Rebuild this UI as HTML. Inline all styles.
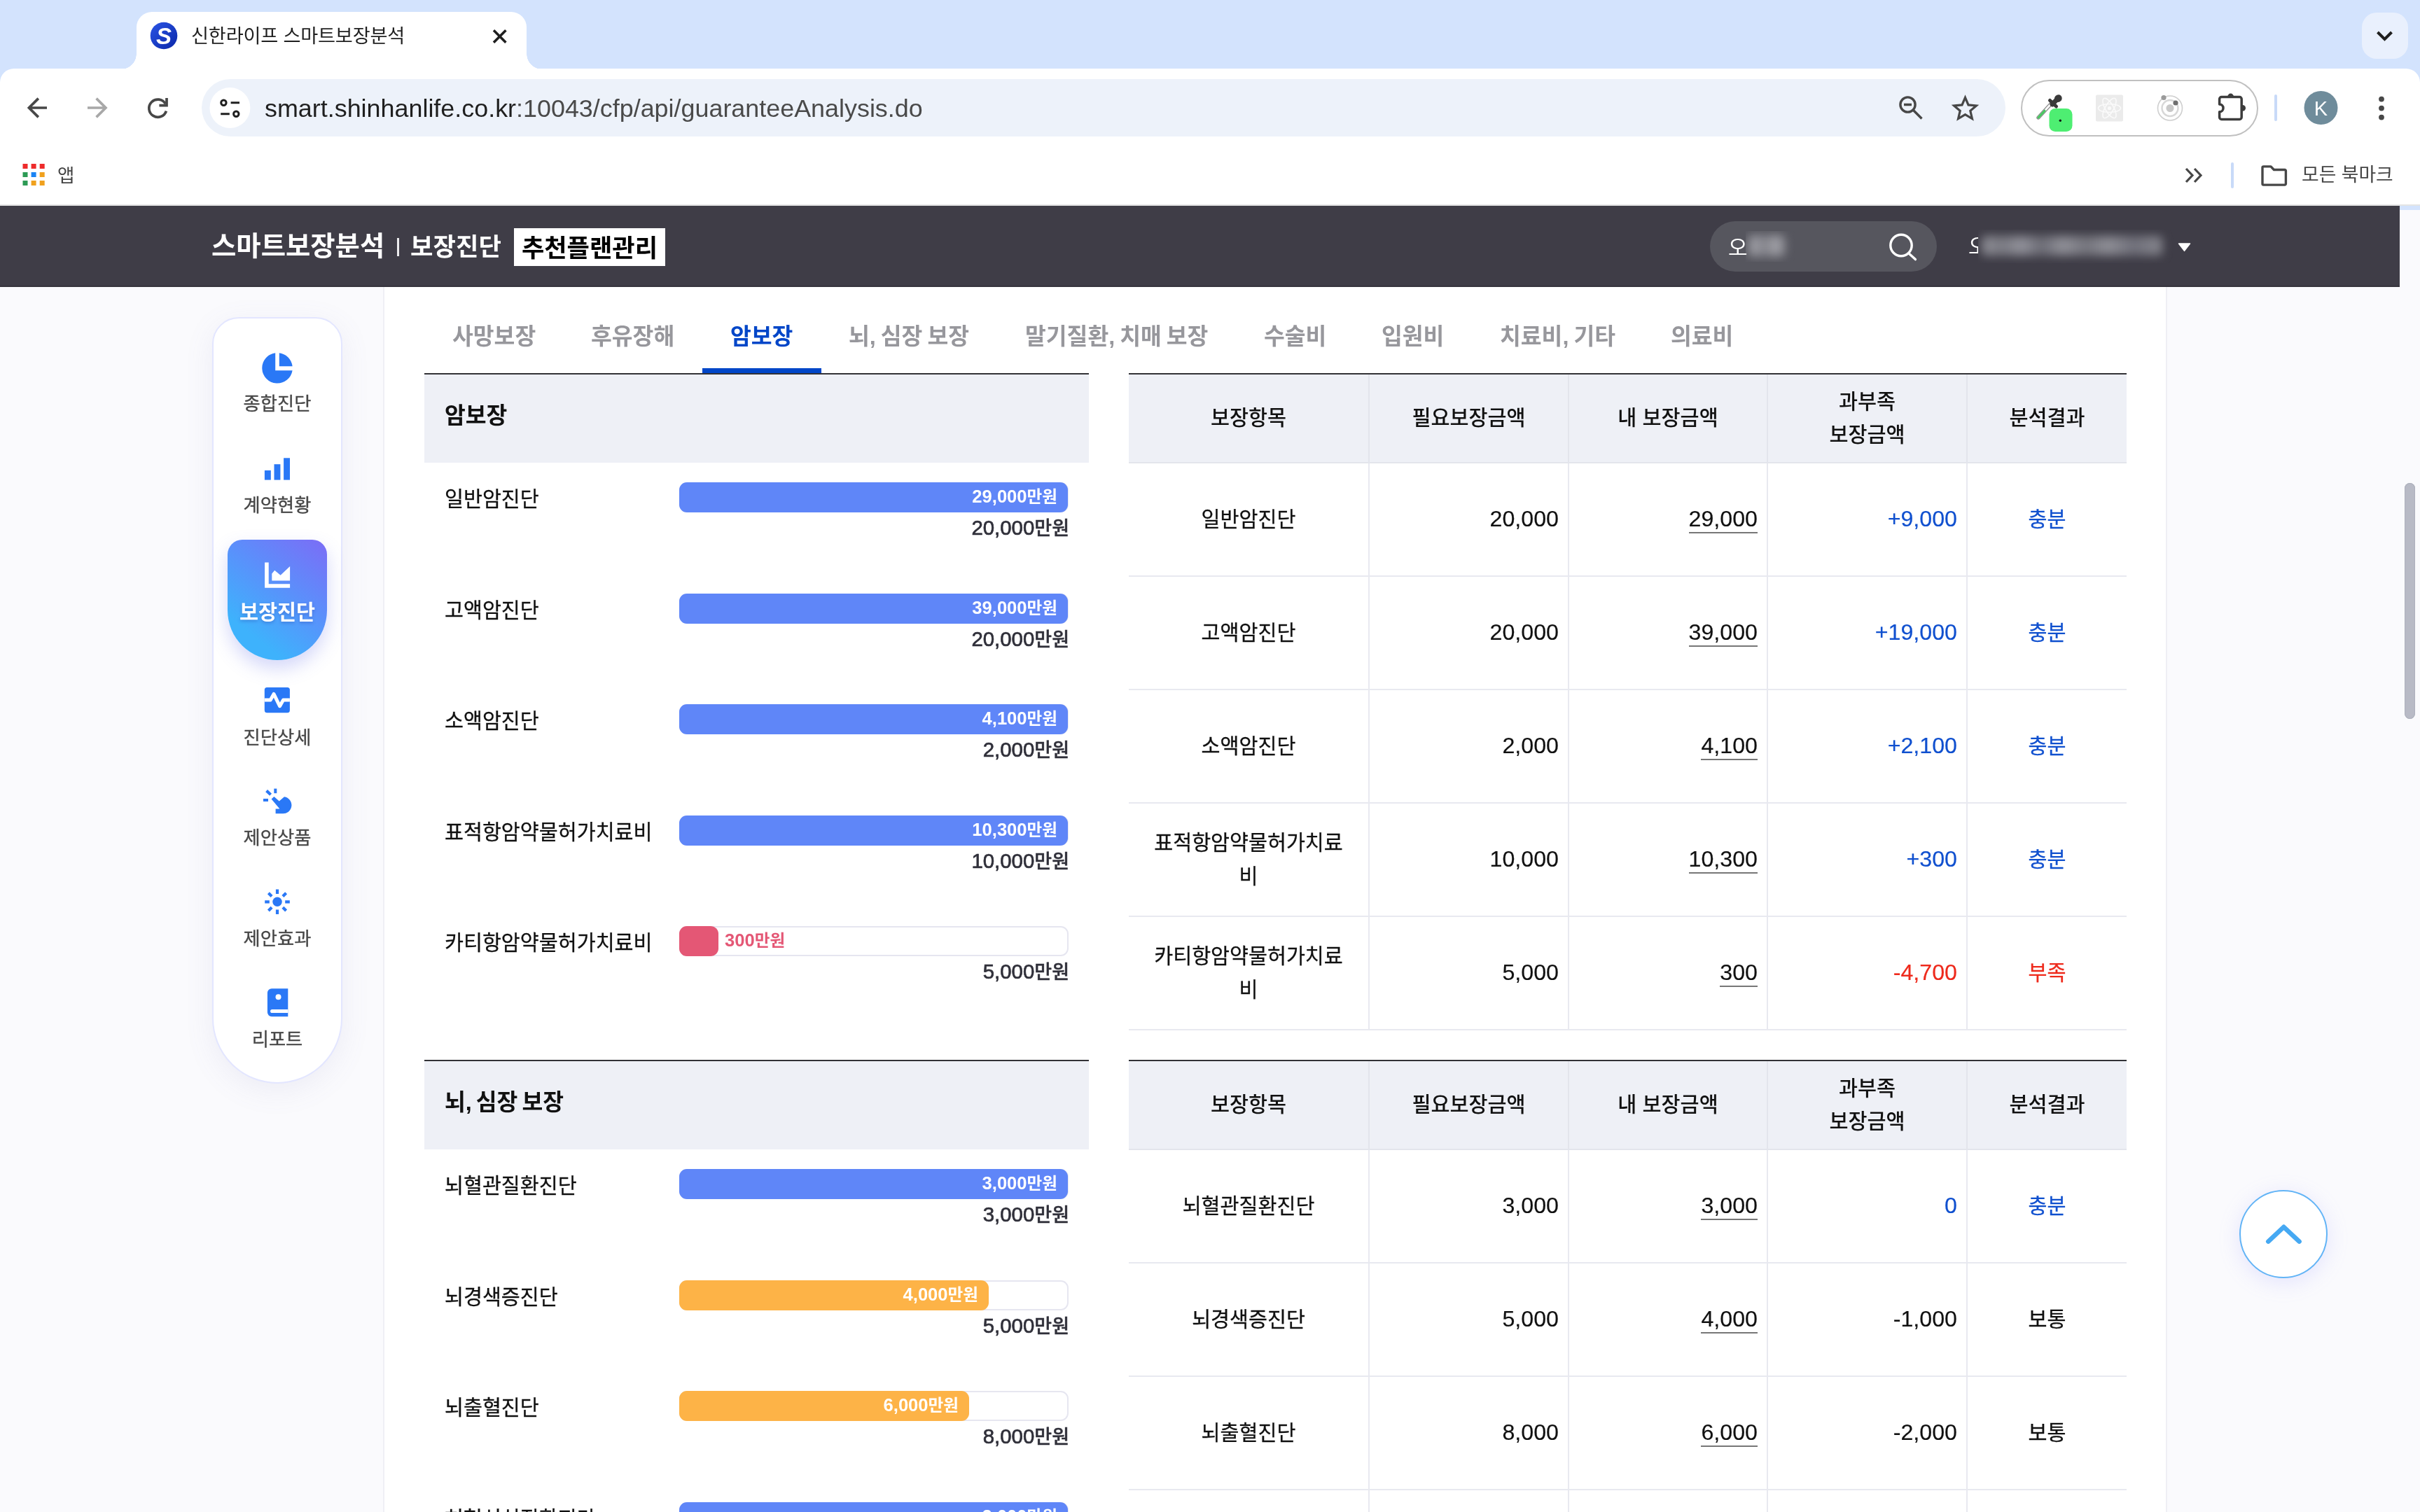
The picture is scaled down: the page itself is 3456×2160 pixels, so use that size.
<!DOCTYPE html>
<html lang="ko">
<head>
<meta charset="utf-8">
<title>신한라이프 스마트보장분석</title>
<style>
*{box-sizing:border-box;margin:0;padding:0}
html,body{width:3456px;height:2160px;overflow:hidden;background:#fafafd}
body{position:relative;font-family:"Liberation Sans","Noto Sans CJK KR",sans-serif;color:#111;-webkit-font-smoothing:antialiased;will-change:transform}
.abs{position:absolute}
/* ---------- browser chrome ---------- */
#tabstrip{left:0;top:0;width:3456px;height:300px;background:#d3e3fd}
#toolbar{left:0;top:98px;width:3456px;height:196px;background:#fff;border-radius:20px 20px 0 0}
#chromeline{left:0;top:292px;width:3456px;height:2px;background:#e4e4e4}
#tab{left:195px;top:17px;width:557px;height:82px;background:#fff;border-radius:22px 22px 0 0}
#tab:before,#tab:after{content:"";position:absolute;bottom:0;width:22px;height:22px}
#tab:before{left:-22px;background:radial-gradient(circle at 0 0,transparent 21.5px,#fff 22px)}
#tab:after{right:-22px;background:radial-gradient(circle at 100% 0,transparent 21.5px,#fff 22px)}
#tabtitle{left:273px;top:31px;font-size:27.2px;line-height:42px;color:#1f1f1f;white-space:nowrap;letter-spacing:-0.2px}
#urlpill{left:288px;top:113px;width:2576px;height:82px;border-radius:41px;background:#edf2fa}
#urltext{left:378px;top:133px;font-size:35.9px;line-height:44px;color:#1f1f1f;white-space:nowrap}
#extpill{left:2886px;top:114px;width:339px;height:81px;border-radius:41px;border:2px solid #c0c0c0;background:#fff}
#bmtext1{left:82px;top:230.5px;font-size:26.5px;line-height:40px;color:#444}
#bmtext2{left:3287px;top:230px;font-size:26.8px;line-height:40px;color:#444;white-space:nowrap}
/* ---------- page header ---------- */
#hdr{left:0;top:294px;width:3427px;height:116px;background:#3f3d47;border-bottom:2px solid #36343d}
#hdr .t1{left:302px;top:28px;font-size:38.4px;line-height:60px;font-weight:700;color:#fff;white-space:nowrap}
#hdr .sep{left:567px;top:46px;width:3px;height:26px;background:#ececee}
#hdr .t2{left:586px;top:29px;font-size:35.3px;line-height:60px;font-weight:700;color:#fff;white-space:nowrap}
#hdr .box{left:734px;top:32px;width:216px;height:54px;background:#fff;color:#000;font-size:35.2px;font-weight:700;line-height:57px;text-align:center;white-space:nowrap}
#search{left:2442px;top:22px;width:324px;height:72px;border-radius:36px;background:#56565e}
#search .o{left:26px;top:15.5px;font-size:30px;line-height:44px;color:#fff}
.blur{filter:blur(7px)}
/* ---------- layout ---------- */
#content{left:547px;top:409px;width:2548px;height:1751px;background:#fff;border-left:2px solid #efeff5;border-right:2px solid #efeff5}
#side{left:303px;top:453px;width:186px;height:1095px;background:#fff;border:2px solid #e3e6ff;border-radius:38px 38px 93px 93px;box-shadow:0 10px 40px rgba(120,120,180,.10)}
.sl{left:303px;width:186px;text-align:center;font-size:26.3px;line-height:36px;color:#474747;white-space:nowrap;margin-top:2.5px;-webkit-text-stroke:.35px #474747}
#act{left:325px;top:771px;width:142px;height:172px;border-radius:21px 21px 71px 71px;background:linear-gradient(38deg,#3eb2fc 22%,#5b8ffb 60%,#7c6cf6 100%);box-shadow:0 12px 26px rgba(90,100,230,.26)}
#actl{left:303px;top:854.3px;width:186px;text-align:center;font-size:29.4px;line-height:42px;font-weight:700;color:#fff;text-shadow:0 2px 4px rgba(40,60,160,.35);white-space:nowrap}
/* tabs */
.tab{top:456px;font-size:32.4px;line-height:50px;font-weight:700;color:#97979c;white-space:nowrap;word-spacing:-2px}
.tab.on{color:#0046c8;font-weight:700}
#tabul{left:1003px;top:526px;width:170px;height:8px;background:#0046c8}
.bline{height:2px;background:#323236}
.sechead{left:606px;width:949px;height:126px;background:#eef0f6}
.sectitle{left:635px;margin-top:2px;word-spacing:-3px;font-size:32.4px;line-height:50px;font-weight:700;color:#111;white-space:nowrap}
/* bar rows */
.rl{left:635px;font-size:29.3px;line-height:44px;color:#111;white-space:nowrap;margin-top:3px;-webkit-text-stroke:.3px #111}
.track{left:970px;width:556px;height:43px;border-radius:11px;background:#fff;border:2px solid #e6e6f0}
.bar{left:970px;height:43px;border-radius:11px;color:#fff;font-weight:700;font-size:23.6px;line-height:41px;text-align:right;padding-right:15px;white-space:nowrap}
.bar b{font-size:25.6px;font-weight:700}
.blue{background:#5f86f8}.org{background:#fdb347}.red{background:#e45775}
.val{left:1227px;width:300px;text-align:right;font-size:27px;line-height:40px;font-weight:500;color:#30303a;white-space:nowrap;-webkit-text-stroke:.45px #30303a}
.val b{font-size:29.4px;font-weight:500;-webkit-text-stroke:.7px #30303a}
/* tables */
table{position:absolute;left:1612px;width:1425px;border-collapse:collapse;table-layout:fixed;border-top:2px solid #2a2a2e}
.tline{left:1612px;width:1425px;height:2px;background:#323236;z-index:2}
th{height:127px;background:#eef0f6;font-size:29.4px;font-weight:500;line-height:46.6px;color:#111;border-bottom:2px solid #e3e5ec;border-left:2px solid #e3e5ec;text-align:center;vertical-align:middle;padding-top:0}
td{height:162px;font-size:29.3px;line-height:48px;color:#111;-webkit-text-stroke:.3px;border-bottom:2px solid #e8e9f0;border-left:2px solid #e8e9f0;text-align:center;vertical-align:middle;padding:0 14px 0}
th:first-child,td:first-child{border-left:none}
td.n{text-align:right;font-size:32.2px;padding-right:13px;padding-bottom:3px;-webkit-text-stroke:.2px}
td.n u{text-decoration:none;border-bottom:2px solid #777;padding-bottom:1px}
.cb{color:#1050cf}.cr{color:#ee2a1c}
td.w{padding:0 30px 0}
</style>
</head>
<body>
<!-- ================= browser chrome ================= -->
<div id="tabstrip" class="abs"></div>
<div id="toolbar" class="abs"></div>
<div id="tab" class="abs"></div>
<div id="chromeline" class="abs"></div>
<div id="tabtitle" class="abs">신한라이프 스마트보장분석</div>
<div id="urlpill" class="abs"></div>
<div id="urltext" class="abs">smart.shinhanlife.co.kr<span style="color:#4a4a4a">:10043/cfp/api/guaranteeAnalysis.do</span></div>
<div id="extpill" class="abs"></div>
<div id="bmtext1" class="abs">앱</div>
<div id="bmtext2" class="abs">모든 북마크</div>
<!--CHROMEICONS-->
<svg class="abs" style="left:0;top:0" width="3456" height="294" viewBox="0 0 3456 294" fill="none">
  <defs>
    <linearGradient id="fav" x1="0" y1="0" x2="1" y2="1"><stop offset="0" stop-color="#2b55e6"/><stop offset="1" stop-color="#0a27a8"/></linearGradient>
  </defs>
  <!-- favicon -->
  <circle cx="234" cy="51" r="19.3" fill="url(#fav)"/>
  <text x="234" y="62.5" text-anchor="middle" font-family="Liberation Sans, sans-serif" font-weight="700" font-style="italic" font-size="33" fill="#fff">S</text>
  <!-- tab close -->
  <path d="M705 43.3l17.4 17.4M722.4 43.3L705 60.7" stroke="#1f1f1f" stroke-width="3.6"/>
  <!-- tab search button -->
  <rect x="3373" y="18" width="66" height="66" rx="21" fill="#e9f0fd"/>
  <path d="M3395.5 46l10 10 10-10" stroke="#1f1f1f" stroke-width="4"/>
  <!-- back / forward / reload -->
  <path d="M67 154H41.5M54.8 140.6L41.4 154l13.4 13.4" stroke="#474747" stroke-width="3.7"/>
  <path d="M125 154h25.5M137.6 140.6L151 154l-13.4 13.4" stroke="#a8a8a8" stroke-width="3.7"/>
  <path d="M236.2 148.2A12.6 12.6 0 1 0 237.4 158.6" stroke="#474747" stroke-width="3.7"/>
  <path d="M238 140v10.6h-10.6" stroke="#474747" stroke-width="3.7"/>
  <!-- site info -->
  <circle cx="328.4" cy="154" r="29" fill="#fff"/>
  <circle cx="319.4" cy="146.7" r="3.7" stroke="#1f1f1f" stroke-width="3"/>
  <path d="M329.6 146.7h12.4M315.2 162.8h12.6" stroke="#1f1f1f" stroke-width="3"/>
  <circle cx="337.3" cy="162.8" r="3.7" stroke="#1f1f1f" stroke-width="3"/>
  <!-- zoom-out icon -->
  <circle cx="2724.5" cy="149.5" r="10.6" stroke="#474747" stroke-width="3.4"/>
  <path d="M2719 149.5h11M2732.5 157.5l12 12" stroke="#474747" stroke-width="3.4"/>
  <!-- star -->
  <path d="M2806.5 139.4l4.5 10.5 11.4 1-8.6 7.5 2.6 11.1-9.9-5.9-9.9 5.9 2.6-11.1-8.6-7.5 11.4-1z" stroke="#474747" stroke-width="3.2" stroke-linejoin="miter"/>
  <!-- extension: eyedropper -->
  <path d="M2911 168l17-18.5" stroke="#8a8a8a" stroke-width="5.4" stroke-linecap="round"/>
  <path d="M2911 168l17-18.5" stroke="#fff" stroke-width="2.6" stroke-linecap="round"/>
  <path d="M2911 168l9-9.8" stroke="#46c95f" stroke-width="3" stroke-linecap="round"/>
  <path d="M2927.5 143.5l9 8.5" stroke="#3a3a3a" stroke-width="5" stroke-linecap="round"/>
  <path d="M2931 149l6-6.5" stroke="#3a3a3a" stroke-width="7" stroke-linecap="round"/>
  <ellipse cx="2939.3" cy="140.6" rx="5.6" ry="5.2" fill="#3a3a3a" transform="rotate(-45 2939.3 140.6)"/>
  <rect x="2926.5" y="155" width="33" height="33" rx="8.5" fill="#4eee72"/>
  <circle cx="2942.3" cy="172.3" r="1.7" fill="#111"/>
  <!-- extension: react (greyed) -->
  <rect x="2993" y="135.5" width="39" height="38" rx="2" fill="#ebebeb"/>
  <g stroke="#fafafa" stroke-width="1.6">
    <ellipse cx="3012.5" cy="154.5" rx="16" ry="6"/>
    <ellipse cx="3012.5" cy="154.5" rx="16" ry="6" transform="rotate(60 3012.5 154.5)"/>
    <ellipse cx="3012.5" cy="154.5" rx="16" ry="6" transform="rotate(120 3012.5 154.5)"/>
  </g>
  <circle cx="3012.5" cy="154.5" r="2.6" fill="#fafafa"/>
  <!-- extension: orbit (greyed) -->
  <circle cx="3099" cy="154.5" r="17.5" stroke="#cfcfcf" stroke-width="1.6"/>
  <circle cx="3099" cy="154.5" r="11.5" stroke="#d8d8d8" stroke-width="2.4"/>
  <circle cx="3099" cy="154.5" r="5.5" fill="#c9c9c9"/>
  <circle cx="3090" cy="139.5" r="3.6" fill="#9a9a9a"/>
  <circle cx="3107" cy="147" r="3.6" fill="#6f6f6f"/>
  <!-- extensions puzzle -->
  <circle cx="3185.6" cy="138" r="4.4" fill="#3c3c3c"/>
  <circle cx="3202.6" cy="154.3" r="4.4" fill="#3c3c3c"/>
  <path d="M3172.6 138.6h25.6a3 3 0 0 1 3 3v25.8a3 3 0 0 1-3 3h-25.6a3 3 0 0 1-3-3v-7.600000000000023a5.4 5.4 0 0 0 0-10.799999999999983v-7.400000000000006a3 3 0 0 1 3-3z" fill="#fff" stroke="#3c3c3c" stroke-width="3.5" stroke-linejoin="round"/>
  <!-- separator, avatar, menu -->
  <rect x="3248" y="135" width="4" height="38" rx="2" fill="#c8daf8"/>
  <circle cx="3314.5" cy="154" r="24" fill="#6f8c9b"/>
  <text x="3314.5" y="165" text-anchor="middle" font-family="Liberation Sans, sans-serif" font-size="29" fill="#fff">K</text>
  <circle cx="3401" cy="141.6" r="3.9" fill="#474747"/><circle cx="3401" cy="154.6" r="3.9" fill="#474747"/><circle cx="3401" cy="167.6" r="3.9" fill="#474747"/>
  <!-- bookmarks bar -->
  <g>
    <rect x="32.5" y="234" width="7" height="7" fill="#ee2b2b"/><rect x="44.6" y="234" width="7" height="7" fill="#ee2b2b"/><rect x="56.7" y="234" width="7" height="7" fill="#ee2b2b"/>
    <rect x="32.5" y="246" width="7" height="7" fill="#2d9b55"/><rect x="44.6" y="246" width="7" height="7" fill="#1b84f4"/><rect x="56.7" y="246" width="7" height="7" fill="#f0a11e"/>
    <rect x="32.5" y="258" width="7" height="7" fill="#2d9b55"/><rect x="44.6" y="258" width="7" height="7" fill="#f0a11e"/><rect x="56.7" y="258" width="7" height="7" fill="#f0a11e"/>
  </g>
  <path d="M3122 241l9 9.5-9 9.5M3134 241l9 9.5-9 9.5" stroke="#474747" stroke-width="3.2"/>
  <rect x="3186" y="232" width="4" height="37" rx="2" fill="#c8daf8"/>
  <path d="M3231 262.5v-23a1.6 1.6 0 0 1 1.6-1.6h10.4l4.4 4.6h15.4a1.6 1.6 0 0 1 1.6 1.6v18.4a1.6 1.6 0 0 1-1.6 1.6h-30.200000000000003a1.6 1.6 0 0 1-1.6-1.6z" stroke="#474747" stroke-width="3.4" stroke-linejoin="round"/>
</svg>
<!--ENDCHROMEICONS-->

<!-- ================= page ================= -->
<div id="content" class="abs"></div>
<!--PAGE-->
<div id="side" class="abs"></div>
<div class="abs sl" style="top:556px">종합진단</div>
<div class="abs sl" style="top:701px">계약현황</div>
<div class="abs sl" style="top:1033px">진단상세</div>
<div class="abs sl" style="top:1176px">제안상품</div>
<div class="abs sl" style="top:1320px">제안효과</div>
<div class="abs sl" style="top:1464px">리포트</div>
<div id="act" class="abs"></div>
<div id="actl" class="abs">보장진단</div>
<svg class="abs" style="left:303px;top:453px" width="186" height="1095" viewBox="303 453 186 1095" fill="none">
  <!-- pie -->
  <path d="M393.2 504.2A21.8 21.8 0 1 0 417.6 529.3H393.2z" fill="#2a78f6"/>
  <path d="M398.8 504.2A21.8 21.8 0 0 1 417.6 523.3H398.8z" fill="#2a78f6"/>
  <!-- bars -->
  <rect x="377.9" y="672" width="8.9" height="13.6" fill="#2a78f6"/>
  <rect x="391.5" y="663.2" width="8.9" height="22.4" fill="#2a78f6"/>
  <rect x="405.1" y="654.3" width="8.9" height="31.3" fill="#2a78f6"/>
  <!-- active: area chart (white) -->
  <path d="M378.1 803.6h5.6v30.7h30.4v5.4h-36z" fill="#fff"/>
  <path d="M388.3 829.4v-10l3.9-4.6 8.4 7 13.5-12.9v20.5z" fill="#fff"/>
  <!-- pulse -->
  <rect x="377.8" y="982.1" width="36.1" height="36.1" rx="3.5" fill="#2a78f6"/>
  <path d="M377.8 1000h8.4l4.8-8.6 8.6 17.4 4.9-8.8h9.4" stroke="#fff" stroke-width="4.9" stroke-linejoin="round"/>
  <!-- click -->
  <path d="M380.6 1129.6l6 5.6" stroke="#2a78f6" stroke-width="4.2"/>
  <path d="M393.3 1126.6v6.6" stroke="#2a78f6" stroke-width="4"/>
  <path d="M376 1143h7" stroke="#2a78f6" stroke-width="4"/>
  <path d="M387.6 1141.6l3.8-3.6 7.3 6.6 7.3-6.3a11.6 11.6 0 0 1-3.4 23.9h-9v-6.6h5.8z" fill="#2a78f6"/>
  <!-- sun -->
  <circle cx="396" cy="1288.3" r="6.7" fill="#2a78f6"/>
  <g stroke="#2a78f6" stroke-width="4.2">
    <path d="M396 1270.5v6.6M396 1299.5v6.6M378.2 1288.3h6.6M407.2 1288.3h6.6"/>
    <path d="M383.4 1275.7l4.7 4.7M403.9 1296.2l4.7 4.7M408.6 1275.7l-4.7 4.7M388.1 1296.2l-4.7 4.7"/>
  </g>
  <!-- book -->
  <path d="M388 1412.2h23.3v40h-23.3a6.100000000000001 6.100000000000001 0 0 1-6.100000000000001-6.100000000000001v-27.8a6.100000000000001 6.100000000000001 0 0 1 6.100000000000001-6.100000000000001z" fill="#2a78f6"/>
  <circle cx="397.5" cy="1424.3" r="4" fill="#fff"/>
  <path d="M411.4 1442h-22.8a2.5 2.5 0 0 0 0 5.1h22.8z" fill="#fff"/>
</svg>

<div class="abs tab" style="left:646px">사망보장</div>
<div class="abs tab" style="left:844px">후유장해</div>
<div class="abs tab on" style="left:1043px">암보장</div>
<div class="abs tab" style="left:1212px">뇌, 심장 보장</div>
<div class="abs tab" style="left:1464px">말기질환, 치매 보장</div>
<div class="abs tab" style="left:1805px">수술비</div>
<div class="abs tab" style="left:1973px">입원비</div>
<div class="abs tab" style="left:2142px">치료비, 기타</div>
<div class="abs tab" style="left:2386px">의료비</div>
<div id="tabul" class="abs"></div>
<div class="abs bline" style="left:606px;top:533px;width:949px"></div>
<div class="abs sechead" style="top:535px"></div>
<div class="abs sectitle" style="top:567px">암보장</div>
<div class="abs rl" style="top:688px">일반암진단</div>
<div class="abs track" style="top:689px"></div>
<div class="abs bar blue" style="top:689px;width:555px"><b>29,000</b>만원</div>
<div class="abs val" style="top:734px"><b>20,000</b>만원</div>
<div class="abs rl" style="top:846.5px">고액암진단</div>
<div class="abs track" style="top:847.5px"></div>
<div class="abs bar blue" style="top:847.5px;width:555px"><b>39,000</b>만원</div>
<div class="abs val" style="top:892.5px"><b>20,000</b>만원</div>
<div class="abs rl" style="top:1005.0px">소액암진단</div>
<div class="abs track" style="top:1006.0px"></div>
<div class="abs bar blue" style="top:1006.0px;width:555px"><b>4,100</b>만원</div>
<div class="abs val" style="top:1051.0px"><b>2,000</b>만원</div>
<div class="abs rl" style="top:1163.5px">표적항암약물허가치료비</div>
<div class="abs track" style="top:1164.5px"></div>
<div class="abs bar blue" style="top:1164.5px;width:555px"><b>10,300</b>만원</div>
<div class="abs val" style="top:1209.5px"><b>10,000</b>만원</div>
<div class="abs rl" style="top:1322.0px">카티항암약물허가치료비</div>
<div class="abs track" style="top:1323.0px"></div>
<div class="abs bar red" style="top:1323.0px;width:56px"></div>
<div class="abs bar" style="top:1323.0px;left:1035px;color:#e45775;text-align:left;padding:0"><b>300</b>만원</div>
<div class="abs val" style="top:1368.0px"><b>5,000</b>만원</div>
<div class="abs tline" style="top:533px"></div>
<table style="top:533px"><colgroup><col style="width:343px"><col style="width:285px"><col style="width:284px"><col style="width:285px"><col style="width:228px"></colgroup>
<tr><th>보장항목</th><th>필요보장금액</th><th>내 보장금액</th><th>과부족<br>보장금액</th><th>분석결과</th></tr>
<tr><td>일반암진단</td><td class="n">20,000</td><td class="n"><u>29,000</u></td><td class="n cb">+9,000</td><td class="cb">충분</td></tr>
<tr><td>고액암진단</td><td class="n">20,000</td><td class="n"><u>39,000</u></td><td class="n cb">+19,000</td><td class="cb">충분</td></tr>
<tr><td>소액암진단</td><td class="n">2,000</td><td class="n"><u>4,100</u></td><td class="n cb">+2,100</td><td class="cb">충분</td></tr>
<tr><td class="w">표적항암약물허가치료비</td><td class="n">10,000</td><td class="n"><u>10,300</u></td><td class="n cb">+300</td><td class="cb">충분</td></tr>
<tr><td class="w">카티항암약물허가치료비</td><td class="n">5,000</td><td class="n"><u>300</u></td><td class="n cr">-4,700</td><td class="cr">부족</td></tr>
</table>
<div class="abs bline" style="left:606px;top:1514px;width:949px"></div>
<div class="abs sechead" style="top:1516px"></div>
<div class="abs sectitle" style="top:1548px">뇌, 심장 보장</div>
<div class="abs rl" style="top:1669px">뇌혈관질환진단</div>
<div class="abs track" style="top:1670px"></div>
<div class="abs bar blue" style="top:1670px;width:555px"><b>3,000</b>만원</div>
<div class="abs val" style="top:1715px"><b>3,000</b>만원</div>
<div class="abs rl" style="top:1827.5px">뇌경색증진단</div>
<div class="abs track" style="top:1828.5px"></div>
<div class="abs bar org" style="top:1828.5px;width:442px"><b>4,000</b>만원</div>
<div class="abs val" style="top:1873.5px"><b>5,000</b>만원</div>
<div class="abs rl" style="top:1986.0px">뇌출혈진단</div>
<div class="abs track" style="top:1987.0px"></div>
<div class="abs bar org" style="top:1987.0px;width:414px"><b>6,000</b>만원</div>
<div class="abs val" style="top:2032.0px"><b>8,000</b>만원</div>
<div class="abs rl" style="top:2144.5px">허혈성심질환진단</div>
<div class="abs track" style="top:2145.5px"></div>
<div class="abs bar blue" style="top:2145.5px;width:555px"><b>2,000</b>만원</div>
<div class="abs val" style="top:2190.5px"><b>2,000</b>만원</div>
<div class="abs tline" style="top:1514px"></div>
<table style="top:1514px"><colgroup><col style="width:343px"><col style="width:285px"><col style="width:284px"><col style="width:285px"><col style="width:228px"></colgroup>
<tr><th>보장항목</th><th>필요보장금액</th><th>내 보장금액</th><th>과부족<br>보장금액</th><th>분석결과</th></tr>
<tr><td>뇌혈관질환진단</td><td class="n">3,000</td><td class="n"><u>3,000</u></td><td class="n cb">0</td><td class="cb">충분</td></tr>
<tr><td>뇌경색증진단</td><td class="n">5,000</td><td class="n"><u>4,000</u></td><td class="n">-1,000</td><td class="">보통</td></tr>
<tr><td>뇌출혈진단</td><td class="n">8,000</td><td class="n"><u>6,000</u></td><td class="n">-2,000</td><td class="">보통</td></tr>
<tr><td>허혈성심질환진단</td><td class="n">2,000</td><td class="n"><u>2,000</u></td><td class="n cb">0</td><td class="cb">충분</td></tr>
</table>
<div class="abs" style="left:3198px;top:1700px;width:126px;height:126px;border-radius:50%;background:#fff;border:2px solid #62b4f6;box-shadow:0 6px 30px rgba(150,150,255,.22)"></div>
<svg class="abs" style="left:3198px;top:1700px" width="126" height="126" viewBox="3198 1700 126 126" fill="none"><path d="M3239.3 1773.6l22.1-20.8 22.2 20.8" stroke="#46a9f3" stroke-width="6.6" stroke-linecap="round" stroke-linejoin="round"/></svg>
<div class="abs" style="left:3434px;top:690px;width:15px;height:337px;border-radius:8px;background:#b8bac6;box-shadow:inset 0 0 0 1px #adb0bc"></div>

<!--ENDPAGE-->

<div id="hdr" class="abs">
  <div class="abs t1">스마트보장분석</div>
  <div class="abs sep"></div>
  <div class="abs t2">보장진단</div>
  <div class="abs box">추천플랜관리</div>
  <div id="search" class="abs"><div class="abs o">오</div></div>
  <!--HDRICONS-->
  <div class="abs" style="left:2493px;top:36px;width:70px;height:44px;overflow:hidden"><div class="abs blur" style="left:4px;top:6px;width:52px;height:30px;border-radius:6px;background:linear-gradient(90deg,#a2a2a8,#8a8a92 40%,#77777f 50%,#a0a0a6 62%,#909098)"></div></div>
  <div class="abs" style="left:2811px;top:36px;width:14px;height:44px;overflow:hidden"><div class="abs" style="left:0;top:0;font-size:30px;line-height:44px;color:#fff">오</div></div>
  <div class="abs" style="left:2825px;top:34px;width:290px;height:48px;overflow:hidden"><div class="abs blur" style="left:5px;top:9px;width:258px;height:28px;border-radius:6px;background:linear-gradient(90deg,#8b8b93,#7a7a82 12%,#91919a 22%,#6c6c75 33%,#8f8f97 45%,#75757d 58%,#8d8d95 70%,#70707a 84%,#85858d)"></div></div>
  <svg class="abs" style="left:2680px;top:20px" width="460" height="80" viewBox="2680 20 460 80" fill="none">
    <circle cx="2715" cy="56.500" r="15.2" stroke="#fff" stroke-width="3.4"/>
    <path d="M2726 68l9.4 8.6" stroke="#fff" stroke-width="3.4" stroke-linecap="round"/>
    <path d="M3111.5 54h16l-8 10.400000000000006z" fill="#fff" stroke="#fff" stroke-width="1.5" stroke-linejoin="round"/>
  </svg>
<!--ENDHDRICONS-->
</div>
</body>
</html>
